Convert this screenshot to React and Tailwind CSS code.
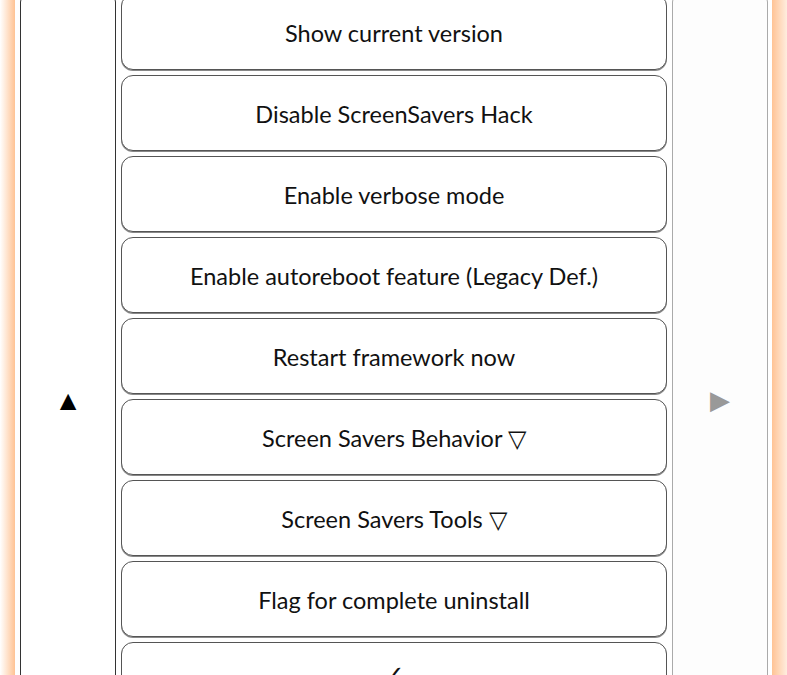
import React from 'react';

const items = [
    'Show current version',
    'Disable ScreenSavers Hack',
    'Enable verbose mode',
    'Enable autoreboot feature (Legacy Def.)',
    'Restart framework now',
    'Screen Savers Behavior ▽',
    'Screen Savers Tools ▽',
    'Flag for complete uninstall',
    '✓',
];

const App = () => {
    return (
        <div
            className="flex h-[675px] w-[787px] overflow-hidden bg-white"
            style={{ fontFamily: 'Lato, "Open Sans", sans-serif' }}
        >
            <div className="w-[15px] shrink-0 bg-gradient-to-r from-white to-[#ffc394]" />
            <div className="ml-[5px] -mt-[10px] flex h-[720px] w-[96px] shrink-0 items-center justify-center rounded-[12px] border border-[#333] bg-white">
                <span className="mt-[98px] text-[28px] leading-none text-black">▲</span>
            </div>
            <div className="ml-[5px] -mt-[6px] flex w-[546px] shrink-0 flex-col gap-[5px]">
                {items.map((label, i) => (
                    <div
                        key={i}
                        className="flex h-[76px] shrink-0 items-center justify-center rounded-[12px] border border-[#555] bg-white pt-[4px] shadow-[0_1px_0_#888]"
                    >
                        <span
                            className={
                                i === items.length - 1
                                    ? 'text-[26px] leading-none text-[#111] -translate-y-[8px]'
                                    : 'text-[23.5px] text-[#111]'
                            }
                        >
                            {label}
                        </span>
                    </div>
                ))}
            </div>
            <div className="ml-[5px] -mt-[10px] flex h-[720px] w-[96px] shrink-0 items-center justify-center rounded-[12px] border border-[#aaa] bg-[#fdfdfd]">
                <span className="mt-[98px] text-[26px] leading-none text-[#999]">▶</span>
            </div>
            <div className="ml-[4px] w-[16px] shrink-0 bg-gradient-to-r from-[#ffc394] to-[#fff0e4]" />
        </div>
    );
};

export default App;
